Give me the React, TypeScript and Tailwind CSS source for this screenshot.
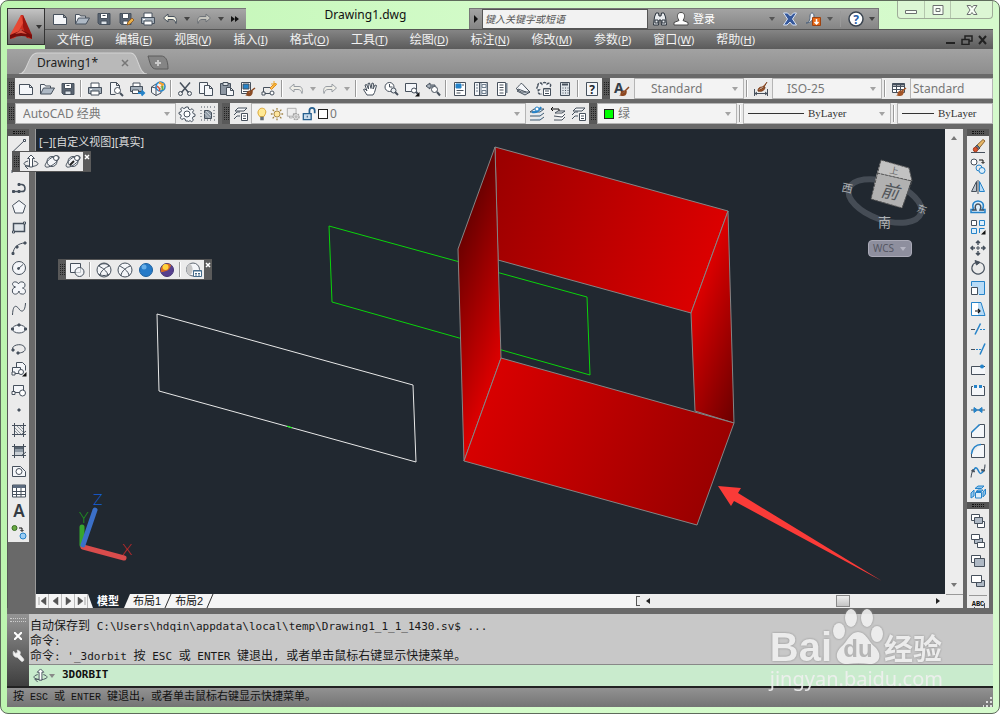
import React from "react";
import type { ReactNode } from "react";

const D = "#46505c";
const B = "#2583c9";
const F = "#f4f6f9";

/* Every glyph is drawn on a 16 x 16 grid. */
const glyphs: Record<string, ReactNode> = {
  new: <path d="M1.5 3.5h10l3 3v7h-13zM11.500 3.500v3h3" fill={F} />,
  open: <><path d="M1.500 13V3.500h4l1 1.500h5v2" fill={F} /><path d="M1.500 13l3-6h11l-3.500 6z" fill="#aeb9c5" /></>,
  save: <><path d="M2 2.500h12v11H3.500L2 12z" fill="#5a6572" /><path d="M4.500 2.500h7v5h-7z" fill="#fff" /><path d="M5 13v-3h6v3" fill="#dde3e9" /><path d="M6.500 4.500h3" /></>,
  saveas: <><path d="M2 2.500h11v11H3.500L2 12z" fill="#5a6572" /><path d="M4.500 2.500h6v5h-6zM5 13v-3h5v3" fill="#fff" /><path d="M9 14l1-3 4-4 2 2-4 4z" fill="#e9b14a" stroke="#94602a" /></>,
  print: <><path d="M4 6V2h8v4" fill="#fff" /><path d="M1.500 6.500h13v6h-13z" fill="#a4afba" /><path d="M4 10h8v4H4z" fill="#fff" /><path d="M3 8.500h2" stroke="#fff" /></>,
  preview: <><path d="M2.500 13.500v-12h6l3 3v3M8.500 1.500v3h3M2.500 13.500h5" fill={F} /><circle cx="9.500" cy="9.500" r="3" fill="#fff" /><path d="M12 12l3 3" strokeWidth="2" /></>,
  publish: <><path d="M4 5V2h7v3" fill="#fff" /><path d="M1.500 5.500h12v5h-12z" fill="#a4afba" /><path d="M3.500 9v3.500h6V9z" fill="#fff" /><path d="M9 12h5M12.500 9.500L15 12l-2.500 2.500" stroke={B} strokeWidth="2" /></>,
  globe: <><path d="M1.500 6L6 3l5 2v7l-5 2.500-4.500-3z" fill={F} /><path d="M6 6.500v8M1.500 6L6 7l5-2" /><circle cx="10.500" cy="5.500" r="4.500" fill="#e9f2fa" stroke={B} strokeWidth="1.500" /><path d="M9 1.500l4 2-2 3" stroke="#f0a030" strokeWidth="2" /><path d="M7 5l3 3-1 2" stroke="#d95336" strokeWidth="1.500" /><path d="M12.500 5v4" stroke="#63ad48" strokeWidth="2" /></>,
  cut: <><path d="M3 1.500l8.500 10M13 1.500L4.500 11.500" strokeWidth="1.500" /><circle cx="3.500" cy="12.500" r="2" /><circle cx="12.500" cy="12.500" r="2" /></>,
  copy: <><path d="M1.500 1.500h8v11h-8z" fill={F} /><path d="M6.500 4.500h5l3 3v7h-8zM11.500 4.500v3h3" fill={F} /></>,
  paste: <><path d="M1.500 2.500h10v11h-10z" fill="#8c96a2" /><path d="M4 1.500h5v3H4z" fill="#dfe4e9" /><path d="M7.500 6.500h4l3 3v5h-7zM11.500 6.500v3h3" fill={F} /></>,
  match: <><path d="M1.500 1.500h9v11h-9z" fill="#fff" /><path d="M3 3h6v5H3z" fill={B} stroke={D} /><path d="M3 10.500h6" /><path d="M7 14c0-3 1-4 4-4l4-3M7 14c3 1 5 0 5-3z" fill="#ba5c25" stroke="#8a4b25" strokeWidth="1.500" /></>,
  blockedit: <><path d="M2.500 6.500h7M2.500 6.500v6M1.500 12.500h8" /><path d="M1 11h3v3H1z" fill="#fff" /><circle cx="11" cy="12" r="2" fill="#fff" /><path d="M9 7l5-5 1.500 1.500-5 5z" fill="#ffc151" stroke="#db8a20" /><path d="M13 0v6M10 3h6" stroke="#eca62a" /></>,
  undo: <path d="M1.500 7L6 3v2.500h5c3 0 4 3 3 7-1-3-2-4-4-4H6V11z" fill="#f3f2e4" />,
  redo: <path d="M14.500 7L10 3v2.500H5c-3 0-4 3-3 7 1-3 2-4 4-4h4V11z" fill="#f3f2e4" />,
  pan: <path d="M5 14L1.500 8.500 3 8l2 2-2-6 1.500-.5L6.500 8 6 2.500l1.500-.5L9 7.500 10 2l1.500.5L11 8l2-4 1.500.5-2 7L11 14z" fill="#fff" />,
  zoom: <><circle cx="6.500" cy="6" r="4.500" fill="#fff" /><path d="M6.500 3v3h3M11 10l4 4" /><circle cx="10.500" cy="9.500" r="2.500" fill="#e9eef2" /><path d="M12 11l3 3" strokeWidth="2" /></>,
  zoomwin: <><path d="M1.500 2.500h11v8h-11z" fill={F} /><circle cx="10" cy="9.500" r="2.500" fill="#fff" /><path d="M12 11l2 2" strokeWidth="2" /><path d="M15.500 11v4.500H11z" fill="#111" stroke="none" /></>,
  zoomprev: <><path d="M1 5l4-3v2h5v2H5v2z" fill="#aab3bd" /><circle cx="9.500" cy="8.500" r="3" fill="#fff" /><path d="M12 11l3 3.500" strokeWidth="2" /></>,
  properties: <><path d="M2.500 1.500h11v13h-11z" fill="#fff" /><path d="M4 3h5v4H4z" fill={B} stroke={B} /><path d="M4.500 9.500h7M4.500 12h4M10 4h2" /></>,
  designcenter: <><path d="M1.500 1.500h13v13h-13zM6.500 1.500v13" fill={F} /><path d="M3 4h2M3 7h2M3 10h2M9 3.500h4v3H9zM9 9.500h4v3H9zM8 2v12M14 2v12" stroke="#6f7e8e" /></>,
  palettes: <><path d="M3.500 1.500h8v13h-8z" fill="#fff" /><path d="M5.500 4h4M5.500 6.500h4M5.500 9h4M5.500 12h4" /><path d="M12.500 2v9h-1" strokeWidth="2" stroke="#758391" /></>,
  sheetset: <><path d="M2 10l8 4 5-3-8-3z" fill="#c7ced6" /><path d="M1 7.500C3 7 5 2 7 2.500l5 5.500 3 3H6z" fill={F} /><path d="M3 8l8 3" /></>,
  markup: <><path d="M2 5c-1-3 3-4 4-2 1-2 4-2 5 0 2-2 5 0 3 3M2 5c-2 2-1 4 1 4-2 2 0 5 3 4" fill={F} strokeDasharray="3 1" strokeWidth="1.500" /><path d="M7.500 7.500h7v7h-7z" fill="#fff" /><path d="M9 10h4M9 12.500h4M8 8h6" /></>,
  calc: <><path d="M3.500 1.500h9v13h-9z" fill="#dfe4e9" /><path d="M5 3.500h6" strokeWidth="2" /><path d="M5.500 7h1M8 7h1M10.500 7h1M5.500 9.500h1M8 9.500h1M10.500 9.500h1M5.500 12h1M8 12h1M10.500 12h1" /></>,
  help: <><path d="M2.500 1.500h11v13h-11z" fill={F} /><text x="8" y="12.500" textAnchor="middle" fontSize="12" fontWeight="700" fill="#20262d" stroke="none">?</text></>,
  textstyle: <><text x="0" y="12" fontSize="14" fontWeight="700" fill="#343d48" stroke="none">A</text><path d="M7 14c0-3 2-4 4-4l4-4M7 14c4 1 5-1 5-3z" fill="#a35426" stroke="#8d461f" strokeWidth="1.500" /></>,
  dimstyle: <><path d="M1.500 8v7M14.500 8v7M2 12.500h12M4 11l-2 1.500L4 14M12 11l2 1.500-2 1.500" /><path d="M5 10c0-4 3-4 6-4l3-5M5 10c4 1 7-1 7-4z" fill="#a35426" stroke="#79401f" /></>,
  tablestyle: <><path d="M1.500 2.500h12v9h-12zM1.500 5.500h12M1.500 8.500h12M5.500 3v8M9.500 3v8" fill="#fff" /><path d="M1.500 3.500h12" strokeWidth="2" /><path d="M7 14c0-3 2-4 4-4l4-3M7 14c4 1 5-1 5-3z" fill="#a35426" stroke="#a35426" strokeWidth="1.500" /></>,
  gear: <><path d="M6.800 1h2.400l.4 2 1.700.8 1.800-1.100 1.500 1.700-1 1.700.6 1.500 1.800.6v2l-2 .6-.6 1.500 1 1.900-1.700 1.500-1.600-1-1.700.7L9 15H6.800l-.6-1.900-1.500-.6-1.900 1-1.500-1.700 1-1.700-.6-1.500L0 8V6.500l2-.7.500-1.300-1-1.700L3.200 1.500l1.600 1 1.500-.5z" fill={F} /><circle cx="8" cy="8" r="3" fill="#fff" /></>,
  workspace: <><path d="M1 1h1M4 1h1M7 1h1M10 1h1M14 1h1M1 4v1M1 7v1M1 10v1M14 4v1M14 7v1M14 10v1M1 14h1M4 14h1M7 14h1M10 14h1M14 14h1" /><path d="M4.500 4.500h4l3 2v6h-7z" fill="#8f9aa5" /><path d="M6 5l5 5M4.500 7l5 5" stroke="#c5ccd3" /></>,
  layers: <><path d="M2 5l3-3h9l-3 3zM1 9l3-3h3M1 13l3-3h3" fill={F} /><path d="M8.500 7.500h6v7h-6zM10 10h3M10 12.500h3" fill="#fff" /></>,
  bulb: <><path d="M5.500 11C3 8 3 6 4 4c2-4 7-3 8 0 1 2 0 4-2 7z" fill="#ffe994" stroke="#d69c24" /><path d="M6 12h4M6 14h4" stroke="#67717a" strokeWidth="2" /></>,
  sun: <><circle cx="8" cy="8" r="3.500" fill="#ffe7a0" stroke="#9b7a35" /><path d="M8 1v2M8 13v2M1 8h2M13 8h2M3 3l1.500 1.500M11.500 11.500L13 13M13 3l-1.500 1.500M3 13l1.500-1.500" stroke="#a18446" strokeWidth="1.500" /></>,
  vpfreeze: <><path d="M1.500 1.500h10v6h-3v3h-7zM4 10.500v2h3" fill="#eee" stroke="#a8a8a8" /><circle cx="11.500" cy="11" r="3.500" fill="#ddd" stroke="#a0a0a0" strokeWidth="1.500" strokeDasharray="2 1" /><circle cx="11.500" cy="11" r="1" stroke="#aaa" /></>,
  unlock: <><path d="M1.500 7.500h9v7h-9z" fill="#c9dcec" stroke="#265f8e" strokeWidth="1.500" /><path d="M8.500 7V4c0-4 6-4 6 0v3" stroke="#265f8e" strokeWidth="2" /><path d="M6 10v2" stroke="#163b60" /></>,
  makecurrent: <><path d="M1 6l4-3h10l-4 3zM1 10h10l4-3M1 14h10l4-3" fill="#d4e7f6" stroke="#40586c" /><path d="M3 6c5 1 7-1 9-5" stroke={B} strokeWidth="2" /><circle cx="8" cy="3" r="2" fill="#fff" stroke={B} /></>,
  layerprev: <><path d="M5 7l3-2h7l-3 2zM4 10l8 1 3-3M4 14h8l3-3" fill="#fff" /><path d="M1 3h8v2M3 1L1 3l2 2" stroke="#111" /></>,
  line: <><path d="M2 13.500L14 2" /><path d="M12.500 1.500h2v2h-2z" fill="#fff" /></>,
  xline: <path d="M1 14L15 2M1 12v3M15 1v3" />,
  pline: <><path d="M2 12.500h9c4 0 4-6 0-7H7" strokeWidth="1.500" /><path d="M1.500 11.500h2v2h-2zM7 11.500h2v2H7zM7 4.500h2v2H7z" fill={D} /></>,
  polygon: <path d="M8 1.500l6.500 5-2.500 7.500H4L1.500 6.500z" fill={F} />,
  rect: <><path d="M2.500 4.500h11v8h-11z" fill="#dfe4e9" strokeWidth="1.500" /><path d="M1.500 12h2v2h-2zM12.500 3h2v2h-2z" fill="#fff" /></>,
  arc: <><path d="M2 14C2 8 7 3 14 3" /><path d="M1 12.500h2v2H1zM5 6h2v2H5zM13 2h2v2h-2z" fill={D} /></>,
  circle: <><circle cx="8" cy="8" r="6.500" fill={F} /><path d="M7.500 8.500L12 4.500" /><circle cx="7.500" cy="8.500" r="1" fill={D} /></>,
  cloud: <path d="M4.500 7C0 6 1 1 5 2c1.500.2 2 1 2.500 2C8 1 14 1 14 5c0 2-1 3-2.500 3C16 9 15 15 11 14c-2 0-3-1-3-3-1 4-6 4-6.500 1C1 9 2 8 4.500 7z" fill={F} />,
  spline: <path d="M1.500 14C2 2 6 5 8 8s6 4 6.500-6" />,
  ellipse: <><ellipse cx="8" cy="8" rx="6.500" ry="4" fill={F} /><path d="M7 3h2v2H7zM.500 7h2v2h-2zM13.500 7h2v2h-2z" fill={D} /></>,
  elliparc: <><path d="M2 9c-3-5 10-8 12-2 1 4-4 5-7 5" /><path d="M1 8h2v2H1zM6 11h2v2H6z" fill={D} /></>,
  insert: <><path d="M5.500 6V1.500h6l3 3v5M1.500 6.500h8v6h-8z" fill={F} /><path d="M1 11h3v3H1z" fill="#fff" /><circle cx="10" cy="11" r="2.500" fill="#fff" /><path d="M15.500 11v4.500H11z" fill="#111" stroke="none" /></>,
  block: <><path d="M2.500 3.500h10v7h-10z" fill={F} /><path d="M1 9.500h3v3H1z" fill="#fff" /><circle cx="11.500" cy="11" r="3" fill="#fff" /></>,
  point: <path d="M7 7h2v2H7z" fill={D} />,
  hatch: <><path d="M3.500 1v14M12.500 1v14M1 3.500h14M1 12.500h14" /><path d="M4 6l6 6M4 9l3 3M6 4l6 6M9 4l3 3" stroke="#8d979f" /><path d="M10 13l5-4" /></>,
  gradient: <><path d="M4 4h8v2H4z" fill="#596571" stroke="none" /><path d="M4 6h8v3H4z" fill="#8f9aa5" stroke="none" /><path d="M4 9h8v3H4z" fill="#cbd1d6" stroke="none" /><path d="M3.500 1v14M12.500 1v14M1 3.500h14M1 12.500h14M10 13l5-4" /></>,
  region: <><path d="M1.500 3.500h8l5 5v5h-13z" fill={F} /><circle cx="8" cy="8.500" r="3" fill="#fff" /></>,
  table: <><path d="M1.500 2h13v12h-13zM1.500 8.500h13M1.500 11.500h13M5.500 5v9M10 5v9" fill="#fff" /><path d="M2 3.500h12" strokeWidth="3" stroke="#5b6a7d" /></>,
  mtext: <text x="8" y="14" textAnchor="middle" fontSize="17" fontWeight="600" fill="#343b43" stroke="none">A</text>,
  addsel: <><circle cx="3.500" cy="4" r="2.500" fill="#69aa42" stroke="#396d24" /><circle cx="12" cy="12" r="3" fill="#9ccdf4" stroke={B} /><path d="M8 4h3v3M9.500 6L11 7.500 12.500 6" stroke="#111" /></>,
  erase: <><path d="M1 14.500h14" /><path d="M5.500 8.500l7.500-7 2 1.500-6.500 8z" fill="#e8b866" stroke="#8c6434" /><path d="M5.500 8.500l1.500-1.500 3 3-1.500 1.500z" fill="#6b7480" /><circle cx="5.500" cy="11.500" r="2.200" fill="#d7552c" stroke="#a4371b" /></>,
  copyobj: <><circle cx="4" cy="4" r="3" fill="#fff" /><path d="M9 2h4v3M11.500 4L13 5.500 14.500 4" stroke="#111" /><circle cx="9" cy="10" r="3" stroke={B} /><circle cx="12" cy="12.500" r="3" fill="#dceefb" stroke={B} /></>,
  mirror: <><path d="M6.500 2.500v10h-5zM8 1v14" fill="#bdc5ce" /><path d="M9.500 2.500v10h5z" fill="#b7dbf7" stroke={B} /></>,
  offset: <><path d="M1 13.500h14v-3h-2.500C15 5 12 2 8 2S1.500 5 3.500 10.500H1z" fill="#dceefb" stroke={B} strokeWidth="1.500" /><path d="M2 11h4C4 7 6 5 8 5s4 2 2 6h4" strokeWidth="1.500" /></>,
  array: <><path d="M1.500 1.500h5v5h-5z" fill="#fff" /><path d="M9.500 1.500h5v5h-5zM1.500 9.500h5v5h-5zM9.500 14V9.500h5" fill="#dceefb" stroke={B} /><path d="M15.500 11v4.500H11z" fill="#111" stroke="none" /></>,
  move: <><path d="M8 1v4M8 11v4M1 8h4M11 8h4M6 3l2-2 2 2M6 13l2 2 2-2M3 6L1 8l2 2M13 6l2 2-2 2" strokeWidth="1.500" /><path d="M7 7h2v2H7z" /></>,
  rotate: <><path d="M9 2.500C15 3 16 10 11.500 13S1 12 2 7c.5-2 2-4 4-4.500" strokeWidth="1.200" /><path d="M5 .500l5 1.800L6.500 5z" fill={D} /></>,
  scale: <><path d="M1.500 6V1.500h13v13H9" fill="#b7dbf7" stroke={B} /><path d="M1.500 7.500h6v7h-6z" fill="#fff" /></>,
  stretch: <><path d="M8 1.500h3L15 14.500H8" fill="#b7dbf7" stroke={B} /><path d="M8 1.500H1.500v13H8" fill="#fff" stroke={B} /><path d="M5 10h5M8 8l2 2-2 2" stroke="#111" strokeWidth="1.200" /></>,
  trim: <><path d="M1 8.500h4" /><path d="M10 8.500h6" stroke={B} strokeDasharray="2 1" /><path d="M5 13.500L10.500 2.500" stroke={B} strokeWidth="1.500" /></>,
  extend: <><path d="M1 8.500h4" /><path d="M6 8.500h5" stroke={B} strokeDasharray="2 1" /><path d="M10 13.500L15 2.500" stroke={B} strokeWidth="1.500" /></>,
  breakpt: <><path d="M15 12.500H1.500v-8H15" fill={F} /><circle cx="12" cy="4.500" r="2" fill={B} stroke="none" /></>,
  break: <><path d="M3 4.500H1.500v9h13v-9H13" fill={F} /><path d="M4 3h3v3H4zM9 3h3v3H9z" fill={B} stroke="none" /></>,
  join: <><path d="M1 8h14" /><path d="M4 5.500L7.500 8 4 10.500zM12 5.500L8.500 8l3.500 2.500z" fill={B} stroke={B} /></>,
  chamfer: <><path d="M1.500 9v5.500h13v-13H10L1.500 9z" fill={F} /><path d="M1.500 9.500l8-8" stroke={B} strokeWidth="1.500" /></>,
  fillet: <><path d="M1.500 11v3.500h13v-13H11" fill={F} /><path d="M1.500 11C2 5 6 1.500 11 1.500" stroke={B} strokeWidth="1.500" /></>,
  blend: <><path d="M1 14.500C1.500 11 2 9 3 6.500M15 1.500c0 3-.5 5-2 7.500M1.500 8L3.500 6l1 3zM11.500 6.500l1 3 2.500-2z" fill={D} /><path d="M4 7c2-5 4 0 5 2s3 2 4-1" stroke={B} strokeWidth="1.500" /></>,
  explode: <><path d="M5.500 8.500h6v5.500h-6z" fill="#dceefb" stroke={B} /><path d="M1 9l3-3v6l-3 2zM13 8l2.500-3v5L13 13zM5 4.500L8 2h6l-2.500 2.500zM6 7.500l2-1.500h5L11.500 7.500z" fill="#8cc5ef" stroke={B} /></>,
  front: <><path d="M1.500 1.500h8v6h-8zM7.500 8.500h7v6h-7z" fill="#fff" /><path d="M4.500 4.500h8v6h-8z" fill="#aeb8c4" /></>,
  back: <><path d="M4.500 5.500h8v5h-8z" fill="#aeb8c4" /><path d="M1.500 1.500h8v5h-8zM7.500 9.500h7v5h-7z" fill="#fff" /></>,
  above: <><path d="M1.500 2.500h9v7h-9z" fill="#fff" /><path d="M4.500 5.500h10v8h-10z" fill="#aeb8c4" /></>,
  under: <><path d="M6.500 7.500h8v6h-8z" fill="#aeb8c4" /><path d="M1.500 2.500h10v7h-10z" fill="#fff" /></>,
  orbit: <><path d="M5 7c-4 1-5 3-3 4 3 2 9 2 12 0 2-1 1-3-3-4M2 12l3 3M2 12h4" /><path d="M6.500 13V4.500h-2L8 1l3.500 3.500h-2V13z" fill="#fff" /></>,
  freeorbit: <><circle cx="8" cy="7.500" r="5" fill={F} /><path d="M2 13C-1 12 4 5 9 3s8-1 5 3-9 8-12 7" /><circle cx="12" cy="4" r="2.500" fill="#fff" /></>,
  contorbit: <><circle cx="8" cy="7.500" r="5" fill={F} /><path d="M2 13C-1 12 4 5 9 3s8-1 5 3-9 8-12 7" /><path d="M5 11l4-4" strokeWidth="2" stroke="#222" /><circle cx="12" cy="4" r="2.500" fill="#fff" /></>,
  wire2d: <><path d="M1.500 1.500h10v9h-10z" fill={F} /><circle cx="10.500" cy="10" r="4.500" fill={F} fillOpacity=".7" /></>,
  wire3d: <><circle cx="8" cy="8" r="7" fill={F} /><path d="M2.500 4C5 5 12 9 12 14M13.500 4C10 5 4 9 4 14M3 4c2-3 8-3 10 0M2.500 12c3 2 8 2 11 0" /></>,
  hidden: <><circle cx="8" cy="8" r="7" fill={F} /><path d="M2.500 4C5 5 12 9 12 14M13.500 4C10 5 4 9 4 14" /></>,
  vsmanage: <><circle cx="7" cy="7.500" r="6.500" fill={F} stroke="#5c6570" /><path d="M4 1.700a6.500 6.500 0 0 0 0 11.600C7 11 8 5 4 1.700z" fill="#c6c6c6" stroke="none" /><path d="M7.500 8.500h8v6h-8z" fill="#fff" stroke="#456c8b" /><path d="M7.500 9h8M9 11.500h2M12 11.500h2M9 13h2M12 13h2" stroke="#456c8b" /></>,
  real: <><circle cx="8" cy="8" r="6.500" fill="#267bc8" stroke="#1d609e" /><circle cx="6" cy="5" r="2.500" fill="#65aee8" stroke="none" /></>,
  concept: <><circle cx="8" cy="8" r="6.500" fill="#57408e" stroke="#443476" /><path d="M2 10a6.500 6.500 0 0 1 10-7c-1 5-5 7-10 7z" fill="#d66c25" stroke="none" /><circle cx="6.500" cy="5" r="3" fill="#ffd23d" stroke="none" /></>,
  binoc: <path d="M2.500 6L4 2h2.500l.5 3h2l.5-3H12l1.500 4 1 8h-5l-.5-5H7l-.5 5h-5zM3 9h3v3H3zM10 9h3v3h-3z" fill="#e8ebee" stroke="#2a333d" />,
  user: <path d="M8 1.500c4 0 4 4 3 6l-1 2 5 2v2.500H1v-2.500l5-2-1-2c-1-2-1-6 3-6z" fill="#fff" stroke="#4a4a4a" />,
  exchange: <path d="M1.500 2h4l3 3 3-3h3l-4 6 4 6h-4L8 11l-3 3H1.500l4-6z" fill="#35589b" stroke="#d7e2f6" />,
  share: <><path d="M1 12c3 0 4-3 4-7 0-4 4-4 4 0 0 3-3 7-8 7z" fill="#eef2f7" stroke="#53667e" /><path d="M7.500 6.500h8v8h-8z" fill="#e86b19" stroke="#9d4210" /><path d="M11.500 8v4M9.500 11l2 2 2-2" stroke="#fff" strokeWidth="1.500" /></>,
  qhelp: <><circle cx="8" cy="8" r="7" fill="#fff" stroke="#3a4450" strokeWidth="1.500" /><text x="8" y="12.500" textAnchor="middle" fontSize="12" fontWeight="700" fill="#285da8" stroke="none">?</text></>,
  wrench: <path d="M2 1.500L5 4.500 7.500 3 7 0c4 1 5 3 3.500 6l5 6c1 2-1 4-3 3L7 9.500C3 10 .5 6 2 1.500z" fill="#f1f1f1" stroke="#ddd" />,
  abc: <><text x="8" y="8" textAnchor="middle" fontSize="7" fontWeight="700" fontFamily="Liberation Mono" fill="#111" stroke="none">ABC</text><path d="M14.500 5v6M4.500 9v6M4.500 10.500h9v5" /></>,
};

function Glyph({ name, className = "size-4" }: { name: string; className?: string }) {
  return (
    <svg viewBox="0 0 16 16" fill="none" stroke={D} strokeWidth="1" className={`${className} shrink-0 overflow-visible`} aria-hidden="true">
      {glyphs[name]}
    </svg>
  );
}

function Tool({ name, className = "w-[21px]" }: { name: string; className?: string }) {
  return (
    <button type="button" aria-label={name} className={`${className} flex shrink-0 items-center justify-center`}>
      <Glyph name={name} />
    </button>
  );
}

const Sep = () => <span className="mx-0.5 my-0.5 w-px shrink-0 border-x border-r-white border-l-[#9a9a9a]" />;

function Caret({ className = "w-3", color = "#a3a3a3" }: { className?: string; color?: string }) {
  return (
    <svg viewBox="0 0 6 4" className={`${className} h-1 shrink-0`} fill={color} aria-hidden="true">
      <path d="M0 0h6L3 4z" />
    </svg>
  );
}

function DropButton({ label, color, className = "w-3" }: { label: string; color?: string; className?: string }) {
  return (
    <button type="button" aria-label={label} className={`${className} flex shrink-0 items-center justify-center`}>
      <Caret className="w-1.5" color={color} />
    </button>
  );
}

const Grip = () => (
  <span className="flex w-2 shrink-0 items-center justify-center gap-px bg-[#595959] py-1">
    <span className="h-full border-l border-dotted border-[#222]" />
    <span className="h-full border-l border-dotted border-[#222]" />
    <span className="h-full border-l border-dotted border-[#222]" />
  </span>
);

const TopGrip = () => (
  <span className="flex h-[7px] shrink-0 flex-col items-center justify-center gap-px bg-[#555]">
    <span className="w-3 border-t border-dotted border-[#111]" />
    <span className="w-3 border-t border-dotted border-[#111]" />
  </span>
);

function Combo({ label, value, className, children, text = "text-xs text-[#777]" }: { label: string; value: string; className: string; children?: ReactNode; text?: string }) {
  return (
    <div className={`${className} relative flex shrink-0 items-center border border-[#b5b5b5] bg-[#f3f3f3]`}>
      {children}
      <select aria-label={label} className={`${text} h-full min-w-0 flex-1 appearance-none bg-transparent pr-4 outline-none`}>
        <option>{value}</option>
      </select>
      <Caret className="pointer-events-none absolute right-1 w-2" />
    </div>
  );
}

const menus = [["文件", "F"], ["编辑", "E"], ["视图", "V"], ["插入", "I"], ["格式", "O"], ["工具", "T"], ["绘图", "D"], ["标注", "N"], ["修改", "M"], ["参数", "P"], ["窗口", "W"], ["帮助", "H"]];

function Header() {
  return (
    <header className="flex shrink-0">
      <button type="button" aria-label="Application menu" className="mt-[7px] flex h-[37px] w-[38px] shrink-0 items-center justify-center gap-1 border border-[#333] bg-linear-to-b from-[#c4c4c4] to-[#696969]">
        <svg viewBox="0 0 22 26" className="h-[26px] w-[22px]" aria-hidden="true">
          <path d="M11 1L0 25l5-1 6-9 6 9 5 1L13 1z" fill="#cb2d20" />
          <path d="M11 1L0 21l5 3L13 9z" fill="#e64a35" />
          <path d="M13 1l9 20-5 3-4-11z" fill="#9d150f" />
          <path d="M0 21l12-5 10 5v4c-5-4-15-4-22 0z" fill="#780d0a" />
          <path d="M5 20l6-4 6 4-6-1z" fill="#db5341" />
        </svg>
        <Caret className="w-1.5" color="#333" />
      </button>
      <div className="min-w-0 flex-1">
        <div className="flex h-[28px] items-end">
          <div className="flex h-[21px] w-[201px] shrink-0 items-center border-t border-[#777] bg-linear-to-b from-[#a6a6a6] to-[#858585] pl-1">
            {["new", "open", "save", "saveas", "print", "undo"].map((n) => <Tool key={n} name={n} className="w-[22px]" />)}
            <DropButton label="Undo list" color="#444" />
            <Tool name="redo" className="w-[22px] opacity-50" />
            <DropButton label="Redo list" color="#444" />
            <button type="button" aria-label="Customize" className="ml-0.5 flex w-3 justify-center">
              <svg viewBox="0 0 8 6" className="h-1.5 w-2" aria-hidden="true"><path d="M0 0l4 3-4 3zM4 0l4 3-4 3z" fill="#111" /></svg>
            </button>
          </div>
          <h1 className="min-w-0 flex-1 self-center truncate pl-4 text-center text-xs text-[#111]">Drawing1.dwg</h1>
          <div className="flex h-[21px] w-[410px] shrink-0 items-center border border-b-0 border-[#777] bg-linear-to-b from-[#a3a3a3] to-[#858585]">
            <button type="button" aria-label="Collapse search" className="flex w-3 justify-center">
              <svg viewBox="0 0 4 8" className="h-2 w-1" aria-hidden="true"><path d="M0 0l4 4-4 4z" fill="#111" /></svg>
            </button>
            <input aria-label="Search" placeholder="键入关键字或短语" className="h-full w-[166px] border border-[#555] bg-[#f2f2f2] px-0.5 text-[10px] italic outline-none placeholder:text-[#555]" />
            <Tool name="binoc" className="w-[23px]" />
            <button type="button" className="flex items-center gap-1 pl-0.5 text-[11px] text-white"><Glyph name="user" />登录</button>
            <span className="flex-1" />
            <DropButton label="Sign in list" color="#555" />
            <Tool name="exchange" className="w-6" />
            <Tool name="share" className="w-[22px]" />
            <DropButton label="Share list" color="#555" />
            <span className="mx-1 h-4 w-px bg-[#999]" />
            <Tool name="qhelp" className="w-[21px]" />
            <DropButton label="Help list" color="#444" />
          </div>
          <div className="ml-[18px] flex h-[18px] shrink-0 self-start rounded-b border border-t-0 border-[#9fac99] bg-[#dcf6d4]">
            {["Minimize", "Maximize", "Close"].map((n, i) => (
              <button key={n} type="button" aria-label={n} className="flex w-[26px] items-center justify-center border-l border-[#b4c6ad] first:border-0 last:w-[42px]">
                <svg viewBox="0 0 12 10" className="h-2.5 w-3" fill="#f8fff6" stroke="#6c7070" aria-hidden="true">
                  {i === 0 && <path d="M.5 5.500h11v3H.5z" />}
                  {i === 1 && <path d="M1 .500h10v9H1zM4 3.500h4v3H4z" />}
                  {i === 2 && <path d="M1 .500h3.500L6 2.500 7.500.500H11L8 5l3 4.500H7.500L6 7.500 4.500 9.500H1L4 5z" />}
                </svg>
              </button>
            ))}
          </div>
        </div>
        <nav className="flex h-[20px] items-center border-t border-[#555] bg-linear-to-b from-[#858585] to-[#5b5b5b] pl-px text-xs text-[#f2f2f2]">
          {menus.map(([name, key]) => (
            <button key={name} type="button" className="shrink-0 px-[11px] leading-4">
              {name}<span className="text-[11px]">(<u>{key}</u>)</span>
            </button>
          ))}
          <span className="flex-1" />
          <div className="flex gap-1 pr-1">
            {["Minimize drawing", "Restore drawing", "Close drawing"].map((n, i) => (
              <button key={n} type="button" aria-label={n}>
                <svg viewBox="0 0 12 10" className="h-2.5 w-3" fill="none" stroke="#222" strokeWidth="1.500" aria-hidden="true">
                  {i === 0 && <path d="M1 8h9" strokeWidth="2" />}
                  {i === 1 && <path d="M1 4.500h7v5H1zM4 4V1h7v5H8" />}
                  {i === 2 && <path d="M2 1l7 8M9 1L2 9" strokeWidth="2" />}
                </svg>
              </button>
            ))}
          </div>
        </nav>
      </div>
    </header>
  );
}

function FileTabs() {
  return (
    <div className="flex h-[25px] shrink-0 items-end bg-linear-to-b from-[#a2a2a2] to-[#8e8e8e] pl-3">
      <div className="relative flex h-[22px] w-[128px] items-center pr-[18px] pl-[18px] text-xs text-[#222]">
        <svg viewBox="0 0 125 22" preserveAspectRatio="none" className="absolute inset-0 h-full w-full" aria-hidden="true">
          <path d="M0 22C9 22 8 1 18 1h91c8 0 7 21 16 21z" fill="#b9b9b9" stroke="#d4d4d4" />
        </svg>
        <button type="button" className="relative flex-1 text-left">Drawing1*</button>
        <button type="button" aria-label="Close Drawing1" className="relative">
          <svg viewBox="0 0 8 8" className="size-2" stroke="#777" strokeWidth="1.500" aria-hidden="true"><path d="M1 1l6 6M7 1L1 7" /></svg>
        </button>
      </div>
      <button type="button" aria-label="New tab" className="mb-1">
        <svg viewBox="0 0 22 15" className="h-[15px] w-[22px]" aria-hidden="true">
          <path d="M1 1h13c4 0 7 3 7 13H9C4 14 3 8 1 1z" fill="#858585" stroke="#5c5c5c" />
          <path d="M8 8h6M11 5v6" stroke="#c9c9c9" strokeWidth="2" />
        </svg>
      </button>
    </div>
  );
}

function Toolbars() {
  const tools = (names: string) => names.split(" ").map((n) => <Tool key={n} name={n} />);
  return (
    <div className="flex shrink-0 flex-col gap-1 bg-[#696969] pt-1 pb-[5px]">
      <div className="flex h-[21px] bg-[#ebebeb]">
        <Grip />
        {tools("new open save")}<Sep />
        {tools("print preview publish globe")}<Sep />
        {tools("cut copy paste match blockedit")}<Sep />
        <Tool name="undo" className="w-[21px] opacity-50" /><DropButton label="Undo steps" className="w-[13px]" />
        <Tool name="redo" className="w-[21px] opacity-50" /><DropButton label="Redo steps" className="w-[13px]" /><Sep />
        {tools("pan zoom zoomwin zoomprev")}<Sep />
        {tools("properties designcenter palettes sheetset markup calc")}<Sep />
        {tools("help")}
        <Grip />
        <Tool name="textstyle" className="w-6" />
        <Combo label="Text style" value="Standard" className="w-[110px] pl-4" /><Sep />
        <Tool name="dimstyle" className="w-[22px]" />
        <Combo label="Dimension style" value="ISO-25" className="w-[110px] pl-3.5" /><Sep />
        <Tool name="tablestyle" className="w-[22px]" />
        <div className="flex min-w-20 flex-1 items-center border border-[#b5b5b5] bg-[#f3f3f3] pl-0.5">
          <select aria-label="Table style" className="w-full appearance-none bg-transparent text-xs text-[#777]"><option>Standard</option></select>
        </div>
      </div>
      <div className="flex h-[21px] bg-[#ebebeb]">
        <Grip />
        <Combo label="Workspace" value="AutoCAD 经典" className="w-[161px] pl-[7px]" />
        {tools("gear workspace")}
        <span className="w-1 bg-[#696969]" /><Grip />
        <Tool name="layers" />
        <Combo label="Layer" value="0" className="w-[275px] pl-0.5">
          <Glyph name="bulb" className="h-3.5 w-4" />
          <Glyph name="sun" className="mr-0.5 h-3.5 w-3.5" />
          <Glyph name="vpfreeze" className="mr-0.5 size-3.5" />
          <Glyph name="unlock" className="size-3.5" />
          <span className="mx-0.5 size-2.5 border border-[#222] bg-white" />
        </Combo>
        {tools("makecurrent layerprev layers")}
        <Grip />
        <Combo label="Color" value="绿" className="w-[140px] pl-1.5">
          <span className="mr-1 size-2.5 border border-[#222] bg-[#0f0]" />
        </Combo>
        <Sep />
        <Combo label="Linetype" value="ByLayer" className="w-[148px] pl-1" text="font-['Liberation_Serif','Noto_Sans_CJK_SC',serif] text-[11px] text-[#333]">
          <span className="mr-1 h-px w-14 bg-[#333]" />
        </Combo>
        <Sep />
        <div className="flex min-w-20 flex-1 items-center border border-[#b5b5b5] bg-[#f3f3f3] pl-1">
          <span className="mr-1 h-px w-8 shrink-0 bg-[#333]" />
          <select aria-label="Lineweight" className="w-full appearance-none bg-transparent font-['Liberation_Serif',serif] text-[11px] text-[#333]"><option>ByLayer</option></select>
        </div>
      </div>
    </div>
  );
}

function Scene() {
  return (
    <svg className="absolute inset-0 h-full w-full" aria-label="Model view">
      <defs>
        <linearGradient id="back" x1="0" y1="0.2" x2="1" y2="0.45"><stop stopColor="#9c0000" /><stop offset="1" stopColor="#dc0000" /></linearGradient>
        <linearGradient id="left" gradientUnits="userSpaceOnUse" x1="477" y1="198" x2="550" y2="225"><stop stopColor="#6d0000" /><stop offset="1" stopColor="#dc0000" /></linearGradient>
        <linearGradient id="bottom" x1="0" y1="0.3" x2="1" y2="0.55"><stop stopColor="#dc0000" /><stop offset="1" stopColor="#980000" /></linearGradient>
        <linearGradient id="right" gradientUnits="userSpaceOnUse" x1="710" y1="262" x2="783" y2="289"><stop stopColor="#dc0000" /><stop offset="1" stopColor="#6a0000" /></linearGradient>
      </defs>
      <g transform="translate(-36 -129)" strokeWidth="1" fill="none">
        <path d="M329 226l258 71 3 78-258-73z" stroke="#0bd40b" />
        <path d="M157 314l256 71 3 77-257-71z" stroke="#e8e8e8" />
        <path d="M287 426l5 2" stroke="#0f0" />
        <g stroke="#858585">
          <path d="M495 147l233 64-37 102-193-53z" fill="url(#back)" />
          <path d="M728 211l6 212-39-12-4-98z" fill="url(#right)" />
          <path d="M495 147l-37 102 6 212 37-103z" fill="url(#left)" />
          <path d="M501 358l233 65-37 102-233-64z" fill="url(#bottom)" />
        </g>
        <path d="M718 486l23 2-3 5 144 88-148-80-3 5z" fill="#fb3b38" />
      </g>
    </svg>
  );
}

function ViewCube() {
  return (
    <div className="absolute top-[21px] right-0 h-[115px] w-[110px]">
      <svg viewBox="835 150 110 115" className="h-full w-full" aria-label="View cube" fontFamily="Noto Sans CJK SC">
        <ellipse cx="885" cy="201" rx="38" ry="19" transform="rotate(19 885 201)" fill="none" stroke="#454c55" strokeWidth="6" />
        <path d="M877 173l34 8-9 27-31-9z" fill="#b1b1b1" />
        <path d="M881 160l28 8 3 13-35-8z" fill="#c2c2c2" />
        <path d="M881 160l-10 39 6-26z" fill="#939393" />
        <path d="M881 160l28 8 3 13-10 27-31-9zM877 173l35 8" fill="none" stroke="#555" strokeDasharray="3 1" />
        <text transform="translate(880 196) rotate(12) skewX(-12)" fontSize="18" fill="#50555a">前</text>
        <text transform="translate(889 173) rotate(12)" fontSize="9" fill="#666">上</text>
        <g fill="#aeb2b5" fontSize="11">
          <text transform="translate(841 191) rotate(12)">西</text>
          <text x="878" y="227" fontSize="13">南</text>
          <text transform="translate(916 211) rotate(20)" fontSize="10">东</text>
        </g>
      </svg>
      <button type="button" className="absolute top-[90px] left-[33px] flex h-[17px] w-11 items-center justify-between rounded border border-[#aaaab7] bg-[#8e8f9e] px-1 text-[10px] text-[#555763]">
        WCS <Caret className="w-2" color="#b5b5c2" />
      </button>
    </div>
  );
}

function UcsIcon() {
  return (
    <svg viewBox="74 488 66 76" className="absolute bottom-[30px] left-[38px] h-[76px] w-[66px]" aria-label="UCS axes" strokeLinecap="round">
      <path d="M82 527v18" stroke="#37a52f" strokeWidth="5" />
      <path d="M83 547l41 11" stroke="#d94c4c" strokeWidth="5" />
      <path d="M83 545l12-35" stroke="#3b70c9" strokeWidth="5" />
      <g fontSize="16" fontFamily="Lato" fontWeight="300">
        <text x="93" y="505" fill="#1460da">Z</text>
        <text x="79" y="523" fill="#1e991e">Y</text>
        <text x="122" y="555" fill="#cb2828">X</text>
      </g>
    </svg>
  );
}

function FloatingBar({ children, className, label }: { children: ReactNode; className: string; label: string }) {
  return (
    <div role="toolbar" aria-label={label} className={`${className} absolute flex h-[21px] border-y border-[#555] bg-[#ebebeb]`}>
      <Grip />
      {children}
      <button type="button" aria-label={`Close ${label}`} className="flex w-2 items-start justify-center bg-[#5b5b5b] pt-0.5">
        <svg viewBox="0 0 6 6" className="size-1.5" stroke="#fff" strokeWidth="1.500" aria-hidden="true"><path d="M1 1l4 4M5 1L1 5" /></svg>
      </button>
    </div>
  );
}

const drawTools = ["line", "xline", "pline", "polygon", "rect", "arc", "circle", "cloud", "spline", "ellipse", "elliparc", "insert", "block", "point", "hatch", "gradient", "region", "table", "mtext", "addsel"];
const modifyTools = ["erase", "copyobj", "mirror", "offset", "array", "move", "rotate", "scale", "stretch", "trim", "extend", "breakpt", "break", "join", "chamfer", "fillet", "blend", "explode"];

const Slash = () => <svg viewBox="0 0 10 14" className="h-3.5 w-2.5 shrink-0" stroke="#333" aria-hidden="true"><path d="M2 14L8 0" /></svg>;

function SheetTabs() {
  const nav = ["M2 0v8M9 0L4 4l5 4z", "M8 0L3 4l5 4z", "M3 0l5 4-5 4z", "M9 0v8M2 0l5 4-5 4z"];
  return (
    <div className="flex h-[14px] shrink-0 items-stretch bg-[#f5f5f5] font-['Liberation_Sans','Noto_Sans_CJK_SC',sans-serif] text-[11px] leading-[14px] text-[#111]">
      {nav.map((d) => (
        <button key={d} type="button" aria-label="Scroll layouts" className="flex w-[13px] items-center justify-center border-r border-[#bbb]">
          <svg viewBox="0 0 11 8" className="h-2 w-[11px]" fill="#555" stroke="#555" strokeWidth=".5" aria-hidden="true"><path d={d} /></svg>
        </button>
      ))}
      <svg viewBox="0 0 9 14" className="h-3.5 w-[9px]" aria-hidden="true"><path d="M0 0h9v14H5z" fill="#202830" /></svg>
      <button type="button" className="bg-[#202830] font-bold text-white">模型</button>
      <svg viewBox="0 0 12 14" className="h-3.5 w-3" aria-hidden="true"><path d="M0 0h11L5 14H0z" fill="#202830" /></svg>
      <button type="button" className="px-0.5">布局1</button><Slash />
      <button type="button" className="px-0.5">布局2</button><Slash />
      <span className="flex-1" />
      <div className="flex w-[310px] items-center bg-[#ededed]">
        <span className="h-2.5 w-1 border border-r-0 border-[#555]" />
        <svg viewBox="0 0 4 6" className="ml-1.5 h-1.5 w-1" aria-hidden="true"><path d="M4 0v6L0 3z" fill="#222" /></svg>
        <span className="flex-1" />
        <span className="mr-[86px] h-3 w-3.5 border border-[#888] bg-linear-to-b from-[#eee] to-[#c4c4c4]" />
        <svg viewBox="0 0 4 6" className="mr-1.5 h-1.5 w-1" aria-hidden="true"><path d="M0 0v6l4-3z" fill="#222" /></svg>
      </div>
      <span className="w-[17px] border-t border-[#999] bg-[#ededed]" />
    </div>
  );
}

function Workspace() {
  return (
    <main className="relative flex min-h-0 flex-1 bg-[#696969]">
      <div className="flex w-[22px] shrink-0 flex-col border-l border-[#555]">
        <TopGrip />
        <div className="flex h-[406px] shrink-0 flex-col bg-[#ebebeb]">
          {drawTools.map((n) => <Tool key={n} name={n} className="min-h-0 flex-1" />)}
        </div>
      </div>
      <section className="ml-1.5 flex min-w-0 flex-1 flex-col border-l border-[#999]">
        <div className="flex min-h-0 flex-1">
          <div className="relative min-w-0 flex-1 overflow-hidden bg-[#212830]">
            <Scene />
            <p className="absolute top-1 left-[3px] text-[11px] leading-[18px] text-[#ddd]">[−][自定义视图][真实]</p>
            <ViewCube />
            <UcsIcon />
          </div>
          <div className="flex w-[18px] flex-col items-center justify-between bg-[#ededed] py-[7px]">
            <Caret className="w-1.5 rotate-180" color="#777" />
            <Caret className="w-1.5" color="#777" />
          </div>
        </div>
        <SheetTabs />
      </section>
      <div className="mr-1 ml-1 flex w-[22px] shrink-0 flex-col overflow-hidden">
        <TopGrip />
        <div className="flex h-[366px] shrink-0 flex-col bg-[#ebebeb]">
          {modifyTools.map((n) => <Tool key={n} name={n} className="min-h-0 flex-1" />)}
        </div>
        <TopGrip />
        <div className="flex min-h-0 flex-1 flex-col bg-[#ebebeb] pt-0.5">
          {["front", "back", "above", "under"].map((n) => <Tool key={n} name={n} className="h-5" />)}
          <span className="mx-0.5 mt-1 h-px shrink-0 bg-[#999]" />
          <Tool name="abc" className="h-5" />
        </div>
      </div>
      <FloatingBar label="orbit toolbar" className="top-[22px] left-[5px]">
        <Tool name="orbit" /><Tool name="freeorbit" /><Tool name="contorbit" />
      </FloatingBar>
      <FloatingBar label="visual styles toolbar" className="top-[130px] left-[51px]">
        <Tool name="wire2d" /><Sep />
        <Tool name="wire3d" /><Tool name="hidden" /><Tool name="real" /><Tool name="concept" /><Sep />
        <Tool name="vsmanage" />
      </FloatingBar>
    </main>
  );
}

/* Latin runs in the command history are set one size below the Chinese ones. */
const Mono = ({ children }: { children: ReactNode }) => <span className="text-[11px]">{children}</span>;

function CommandLine() {
  return (
    <section className="flex shrink-0 border-t-[6px] border-[#696969] bg-[#c8c8c8] font-['DejaVu_Sans_Mono','Noto_Sans_CJK_SC',monospace]">
      <div className="flex w-[22px] shrink-0 flex-col items-center gap-2.5 bg-linear-to-b from-[#949494] to-[#3f3f3f] pt-1">
        <span className="h-1 w-4 border-y border-dotted border-[#ccc]" />
        <button type="button" aria-label="Close command line">
          <svg viewBox="0 0 8 8" className="size-2" stroke="#fff" strokeWidth="2" aria-hidden="true"><path d="M0 0l8 8M8 0L0 8" /></svg>
        </button>
        <button type="button" aria-label="Command options"><Glyph name="wrench" className="size-3" /></button>
      </div>
      <div className="min-w-0 flex-1">
        <div className="h-[50px] pt-[5px] pl-px text-xs leading-[14px] whitespace-pre text-[#181818]">
          <p>自动保存到<Mono> C:\Users\hdqin\appdata\local\temp\Drawing1_1_1_1430.sv$ ...</Mono></p>
          <p>命令<Mono>:</Mono></p>
          <p>命令<Mono>: '_3dorbit </Mono>按<Mono> ESC </Mono>或<Mono> ENTER </Mono>键退出<Mono>, </Mono>或者单击鼠标右键显示快捷菜单。</p>
        </div>
        <div className="flex h-[22px] items-center border-t border-[#888] bg-[#c9ebcd] pl-1">
          <Glyph name="orbit" className="size-[15px]" />
          <Caret className="w-2" color="#888" />
          <input aria-label="Command" defaultValue="3DORBIT" className="ml-1.5 min-w-0 flex-1 bg-transparent text-[11px] font-bold text-[#111] outline-none" />
        </div>
      </div>
    </section>
  );
}

function Watermark() {
  return (
    <div className="pointer-events-none absolute right-[56px] bottom-5 text-[#f0f0f0] opacity-90">
      <div className="flex items-end font-bold drop-shadow-[0_0_1px_#888]">
        <span className="font-['Liberation_Sans',sans-serif] text-[40px] leading-9">Bai</span>
        <span className="relative h-14 w-[52px]">
          <svg viewBox="0 0 52 56" className="h-full w-full" fill="currentColor" aria-hidden="true">
            <ellipse cx="7" cy="22" rx="6" ry="8" /><ellipse cx="19" cy="9" rx="6" ry="9" /><ellipse cx="35" cy="9" rx="6" ry="9" /><ellipse cx="45" cy="25" rx="6" ry="8" />
            <path d="M26 23c8 0 10 9 17 15 9 9 3 18-6 17-7-1-14-1-21 0-9 1-16-8-7-17 7-6 9-15 17-15z" />
          </svg>
          <span className="absolute inset-x-0 bottom-1 text-center font-['Liberation_Sans',sans-serif] text-2xl leading-6 font-bold text-[#b5b5b5]">du</span>
        </span>
        <span className="pb-0.5 font-['Noto_Sans_CJK_SC',sans-serif] text-[29px] leading-8">经验</span>
      </div>
      <p className="font-['Noto_Sans',sans-serif] text-xl leading-7">jingyan.baidu.com</p>
    </div>
  );
}

export default function App() {
  return (
    <div className="relative flex h-screen flex-col overflow-hidden rounded-lg border border-[#5e6b5b] bg-linear-to-r from-[#bdf5b0] via-[#d3fbc9] to-[#d5facc] px-1.5 pb-1.5 font-['Noto_Sans','Noto_Sans_CJK_SC',sans-serif]">
      <Header />
      <FileTabs />
      <Toolbars />
      <Workspace />
      <CommandLine />
      <footer className="flex h-[21px] shrink-0 items-center justify-between border-t-2 border-[#222] bg-linear-to-b from-[#929292] to-[#747474] pl-1.5 font-['Liberation_Mono','Noto_Sans_CJK_SC',monospace] text-[11px] text-[#111]">
        <p className="whitespace-pre">按<span className="text-[10px]"> ESC </span>或<span className="text-[10px]"> ENTER </span>键退出，或者单击鼠标右键显示快捷菜单。</p>
        <svg viewBox="0 0 10 10" className="size-2.5 self-end" fill="#ddd" aria-hidden="true"><path d="M7 0h2v2H7zM7 4h2v2H7zM7 8h2v2H7zM3 4h2v2H3zM3 8h2v2H3zM0 8h1v2H0z" /></svg>
      </footer>
      <Watermark />
    </div>
  );
}
